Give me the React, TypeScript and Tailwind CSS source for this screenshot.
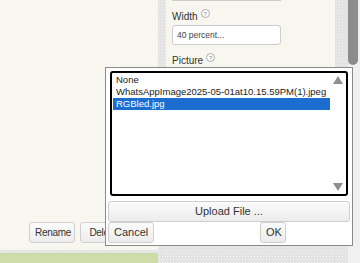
const dotted =
  "bg-[#e3e3e3] bg-[radial-gradient(#f2f2f2_0.6px,transparent_0.8px)] bg-[length:3px_3px]";

function Help() {
  return (
    <span className="inline-flex items-center justify-center w-[9px] h-[9px] rounded-full border border-[#aaa] text-[6px] leading-none text-[#888] align-top ml-[3px] mt-[-2px] bg-white">
      ?
    </span>
  );
}

function Btn({ children, className = "" }: { children: React.ReactNode; className?: string }) {
  return (
    <button
      className={
        "h-[21px] px-[5px] rounded-[3px] border border-[#cfcfcf] bg-[linear-gradient(#fbfbfb,#ececec)] text-[#333] leading-none " +
        className
      }
    >
      {children}
    </button>
  );
}

export default function App() {
  const files = ["None", "WhatsAppImage2025-05-01at10.15.59PM(1).jpeg", "RGBled.jpg"];
  const selected = 2;

  return (
    <div className="relative w-[360px] h-[263px] overflow-hidden bg-white font-['Liberation_Sans',Arial,sans-serif]">
      <div className="flex h-full">
        {/* viewer */}
        <div className="w-[158px] flex flex-col">
          <div className="flex-1 bg-[#f7f7f0] flex items-end pl-[29px] pb-[7px] gap-[5px]">
            <Btn className="text-[10px] tracking-[-0.3px] w-[46px]">Rename</Btn>
            <Btn className="text-[10px] tracking-[-0.3px] w-[46px]">Delete</Btn>
          </div>
          <div className={"h-[3px] " + dotted} />
          <div className="h-[10px] bg-[#cddca8]" />
        </div>

        <div className={"w-[8px] " + dotted} />

        {/* properties */}
        <div className="w-[169px] flex flex-col">
          <div className="h-[246px] bg-[#f7f7f0] pl-[6px] text-[#333]">
            <div className="w-[109px] h-[1px] bg-[#ccc]" />
            <div className="mt-[10px] text-[10px] leading-[12px]">
              Width
              <Help />
            </div>
            <div className="mt-[2px] w-[109px] h-[20px] rounded-[3px] border border-[#ccc] bg-white text-[8.5px] leading-[18px] pl-[4px] text-[#444]">
              40 percent...
            </div>
            <div className="mt-[10px] text-[10px] leading-[12px]">
              Picture
              <Help />
            </div>
          </div>
          <div className={"flex-1 " + dotted} />
        </div>

        {/* scroll column */}
        <div className={"w-[13px] " + dotted} />
        <div className="w-[12px] bg-[#f0f0f0] flex">
          <div className="w-[10px] h-[65px] bg-[#8c8c8c] rounded-b-[5px]" />
        </div>
      </div>

      {/* file picker popup */}
      <div className="absolute left-[105px] top-[67px] w-[248px] h-[179px] bg-white border border-[#8a8a8a] pl-[2px] pr-[2px] pt-[3px]">
        <div className="ml-[2px] mr-[2px] h-[125px] border-2 border-black rounded-[3px] flex">
          <div className="flex-1 p-[1px] pr-0 text-[9.5px] leading-[12px] text-[#222]">
            {files.map((f, i) => (
              <div
                key={f}
                className={
                  "pl-[3px] h-[12px] whitespace-nowrap " +
                  (i === selected ? "bg-[#1c6dd0] text-white" : "")
                }
              >
                {f}
              </div>
            ))}
          </div>
          <div className="w-[16px] flex flex-col items-center justify-between py-[3px]">
            <svg width="10" height="8" viewBox="0 0 10 8">
              <path d="M5 0 L10 8 L0 8 Z" fill="#8f8f8f" />
            </svg>
            <svg width="10" height="8" viewBox="0 0 10 8">
              <path d="M0 0 L10 0 L5 8 Z" fill="#8f8f8f" />
            </svg>
          </div>
        </div>
        <Btn className="mt-[5px] w-full text-[11px]">Upload File ...</Btn>
        <div className="flex">
          <Btn className="text-[11px] w-[46px]">Cancel</Btn>
          <Btn className="ml-[106px] text-[11px] w-[26px]">OK</Btn>
        </div>
      </div>
    </div>
  );
}
